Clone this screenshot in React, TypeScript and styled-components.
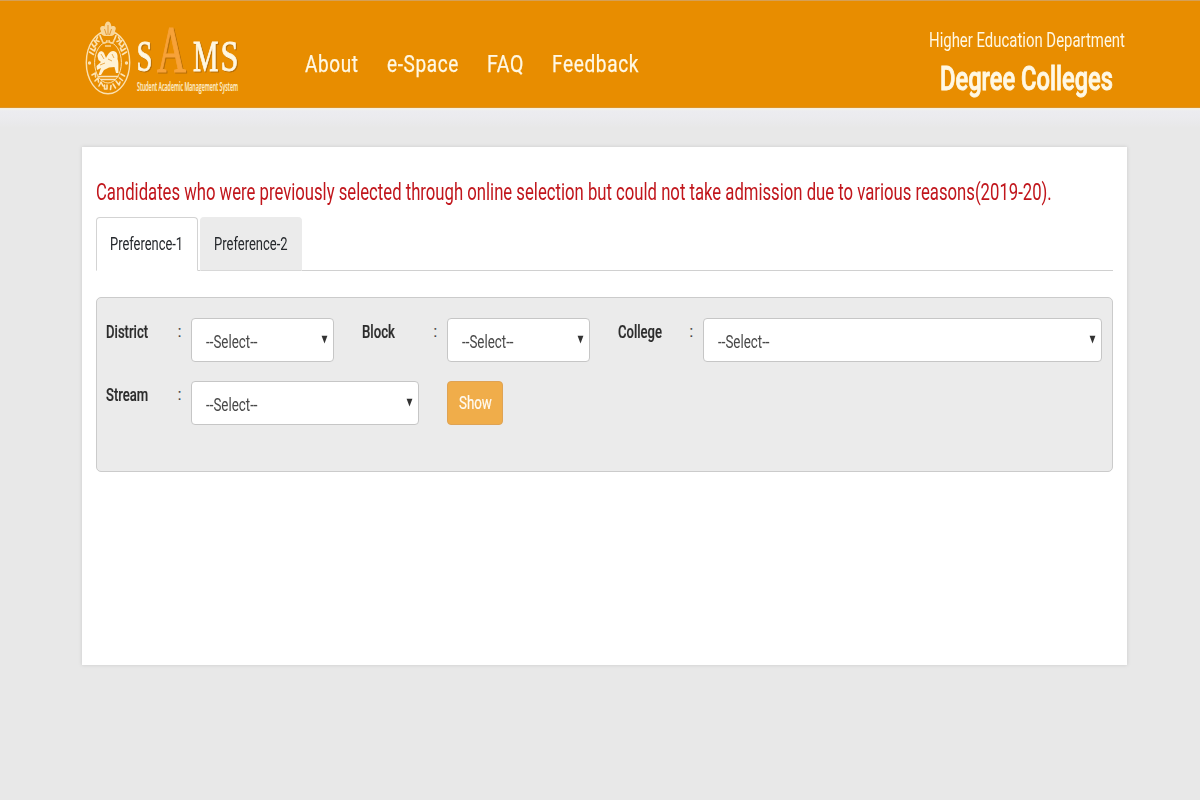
import React, { useLayoutEffect, useRef, useState } from 'react';
import styled, { createGlobalStyle } from 'styled-components';

const Global = createGlobalStyle`
  * { box-sizing: border-box; }
  body { margin: 0; background: #e8e8e8; font-family: Roboto, "Liberation Sans", sans-serif; }
`;

const Page = styled.div`
  min-height: 800px;
  background: #e8e8e8;
`;

const Header = styled.header`
  height: 108px;
  border-top: 1px solid #d5a057;
  border-bottom: 1px solid #dd9428;
  background: #e88d00;
  display: flex;
  align-items: flex-start;
  padding: 0 75px 0 80px;
  color: #fff8e4;
`;

const Logo = styled.svg`
  width: 170px;
  height: 95px;
  margin-top: 9px;
  flex: none;
  overflow: visible;
`;

const LogoLetters = styled.g`
  font-family: "Liberation Serif", serif;
  filter: drop-shadow(1px 1px 0 rgba(150, 90, 10, 0.6));
`;

const Nav = styled.nav`
  display: flex;
  gap: 28px;
  margin: 48px 0 0 55px;
  font-size: 24.8px;
  line-height: 30px;
  font-weight: 400;
  letter-spacing: 0.8px;
  -webkit-text-stroke: 0.25px #fff8e4;
`;

const Department = styled.div`
  margin-left: auto;
  display: flex;
  flex-direction: column;
  align-items: flex-end;
`;

const DeptName = styled.div`
  margin-top: 26px;
  font-size: 21px;
  line-height: 26px;
`;

const DeptUnit = styled.div`
  margin: 5px 12px 0 0;
  font-size: 33px;
  line-height: 42px;
  font-weight: 500;
  -webkit-text-stroke: 0.9px #fff8e4;
`;

const Band = styled.div`
  height: 39px;
  background: linear-gradient(#f8edd2 0, #f3f1ec 1px, #ececf0 3px, #ebebee 10px, #e8e8e8 20px);
`;

const Card = styled.main`
  width: 1045px;
  height: 518px;
  margin-left: 82px;
  padding: 30px 14px 0;
  background: #fff;
  box-shadow: 0 0 4px rgba(0, 0, 0, 0.13);
`;

const Notice = styled.h1`
  margin: 0;
  height: 40px;
  font-size: 24.4px;
  line-height: 29px;
  font-weight: 400;
  color: #c1161c;
`;

const Tabs = styled.div`
  display: flex;
  gap: 2px;
  height: 54px;
  border-bottom: 1px solid #d0d0d0;
`;

const Tab = styled.div<{ $active?: boolean }>`
  width: 102px;
  height: 54px;
  padding-left: 13px;
  border: 1px solid ${(p) => (p.$active ? '#d3d3d3' : '#ebebeb')};
  border-bottom-color: ${(p) => (p.$active ? '#fff' : '#d8d8d8')};
  border-radius: 4px 4px 0 0;
  background: ${(p) => (p.$active ? '#fff' : '#ebebeb')};
  font-size: 18.4px;
  line-height: 51px;
  color: #25282c;
`;

const Panel = styled.section`
  width: 1017px;
  height: 175px;
  margin-top: 26px;
  padding: 20px 10px 0 9px;
  border: 1px solid #cbcbcb;
  border-radius: 5px;
  background: #ebebeb;
`;

const Row = styled.div`
  display: flex;
  height: 63px;
`;

const Label = styled.div`
  width: 71.4px;
  font-size: 18.4px;
  line-height: 27px;
  font-weight: 500;
  color: #2c2c2c;
  -webkit-text-stroke: 0.2px #2c2c2c;
`;

const Colon = styled.div`
  width: 14px;
  font-size: 17px;
  line-height: 27px;
  color: #444;
`;

const Select = styled.div<{ $width: number; $gap?: number }>`
  display: flex;
  justify-content: space-between;
  width: ${(p) => p.$width}px;
  height: 44px;
  margin-right: ${(p) => p.$gap ?? 0}px;
  padding: 0 5px 0 14px;
  border: 1px solid #c6c6c6;
  border-radius: 4px;
  background: #fff;
  font-size: 18.2px;
  line-height: 45px;
  color: #484848;
`;

const Arrow = styled.svg`
  width: 7px;
  height: 9px;
  margin-top: 16px;
`;

const Show = styled.button`
  width: 56px;
  height: 44px;
  padding: 0 0 0 11px;
  border: 1px solid #dfa354;
  border-radius: 4px;
  background: #f0ad4a;
  font: 400 18.2px/42px Roboto, sans-serif;
  text-align: left;
  color: #fffaf0;
  -webkit-text-stroke: 0.2px #fffaf0;
`;

const Fixed = styled.span<{ $width: number }>`
  display: block;
  width: ${(p) => p.$width}px;
  white-space: nowrap;
`;

const Scaled = styled.span`
  display: block;
  width: max-content;
  transform-origin: 0 50%;
`;

/* Condensed text: squeezes its content horizontally to the given width. */
function Condensed({ width, children }: { width: number; children: string }) {
  const ref = useRef<HTMLSpanElement>(null);
  const [scale, setScale] = useState(1);
  useLayoutEffect(() => {
    if (ref.current) setScale(width / ref.current.offsetWidth);
  }, [width, children]);
  return (
    <Fixed $width={width}>
      <Scaled ref={ref} style={{ transform: `scaleX(${scale})` }}>{children}</Scaled>
    </Fixed>
  );
}

function Dropdown({ width, gap }: { width: number; gap?: number }) {
  return (
    <Select $width={width} $gap={gap}>
      <Condensed width={51.5}>--Select--</Condensed>
      <Arrow viewBox="0 0 7 9"><path d="M.6 .8H6.4L3.5 8.4Z" fill="#333" /></Arrow>
    </Select>
  );
}

function Field({ name, nameWidth, width, gap }: { name: string; nameWidth: number; width: number; gap?: number }) {
  return (
    <>
      <Label><Condensed width={nameWidth}>{name}</Condensed></Label>
      <Colon><Condensed width={4}>:</Condensed></Colon>
      <Dropdown width={width} gap={gap} />
    </>
  );
}

function SamsLogo() {
  return (
    <Logo viewBox="0 0 170 95">
      <g fill="none" stroke="#fbe0ae">
        <ellipse cx="28" cy="52.5" rx="21.7" ry="31.3" strokeWidth="1.4" />
        <ellipse cx="28" cy="52.5" rx="13.4" ry="20.5" strokeWidth="1" />
      </g>
      {/* lettering around the ring */}
      <g fill="none" stroke="#fce3b4" strokeWidth="1.6" strokeLinecap="round" strokeLinejoin="round">
        <path d="M9.5 42l4 2.5M10.5 38.5l4 2.5 1-3M12 34l2 3 2-2M14 30.5l3 3.5M17.5 27l-1.5 3.5 3 1M20 25.5l1.5 4" />
        <path d="M46.5 42l-4 2.5M45.5 38.5l-4 2.5-1-3M44 34l-2 3-2-2M42 30.5l-3 3.5M38.5 27l1.5 3.5-3 1M36 25.5l-1.5 4" />
        <path d="M12 65l3.5-2v4M15 71l3-3 .5 4M19 76l2-4 2 4M24.5 75v4h2.5v-4M31 75.5l-.5 4M33 74l2.5 4M36 71l3 4 1-3M39.5 68l3 2.5M41 64l3.5 2" />
      </g>
      <circle cx="9.5" cy="53" r="1.7" fill="#fbe0ae" />
      <circle cx="46.5" cy="53" r="1.7" fill="#fbe0ae" />
      {/* crest */}
      <path d="M28 11.5C31 12 31 15 31.5 16.5C35 15 37 18 35 21C36 24 33 26 30.5 26H25.5C23 26 20 24 21 21C19 18 21 15 24.5 16.5C25 15 25 12 28 11.5Z" fill="#f9d698" />
      <path d="M28 15v10M24.5 19l2 6M31.5 19l-2 6" stroke="#e0912a" strokeWidth=".9" fill="none" />
      <path d="M22 29.5C22 34 27 34 27 30M29 30C29 34 34 34 34 29.5M25 36H31" stroke="#f9d698" strokeWidth="1.5" fill="none" />
      {/* horse and rider */}
      <path d="M17.5 46C18 41 22 40 24 43L26 48C28 44 30 41 33 41C37 41 38 45 37.5 49C39 53 38 57 38.5 63H36L34.5 57L29 57.5L24 60L21 65H18.5L21 58L17 60L16.5 56L21 52L18.5 50Z" fill="#fff2d5" />
      <path d="M21 44l3 5M28 49l4 2M32 44l2 4M20 55l5-2" stroke="#e8a541" strokeWidth=".9" fill="none" />
      <path d="M17.5 66.5H38.5M20.5 69.5H35.5" stroke="#fbe4b8" strokeWidth="1.5" />
      <LogoLetters>
        <text x="77" y="61.5" fontSize="67" fill="#f7a239" stroke="#f7a239" strokeWidth="1.2" textLength="29" lengthAdjust="spacingAndGlyphs">A</text>
        <g fill="#fff7e2" stroke="#fff7e2" strokeWidth=".9">
          <text x="56.5" y="60.5" fontSize="45" textLength="16" lengthAdjust="spacingAndGlyphs">S</text>
          <text x="113" y="60.5" fontSize="44" textLength="25.5" lengthAdjust="spacingAndGlyphs">M</text>
          <text x="140.5" y="60.5" fontSize="45" textLength="18" lengthAdjust="spacingAndGlyphs">S</text>
        </g>
      </LogoLetters>
      <text x="57" y="80.5" fontFamily='"Open Sans", sans-serif' fontWeight="600" fontSize="12.3" fill="#fdebc8" stroke="#fdebc8" strokeWidth=".2" textLength="101" lengthAdjust="spacingAndGlyphs">Student Academic Management System</text>
    </Logo>
  );
}

export default function App() {
  return (
    <Page>
      <Global />
      <Header>
        <SamsLogo />
        <Nav>
          <Condensed width={53.5}>About</Condensed>
          <Condensed width={72}>e-Space</Condensed>
          <Condensed width={37}>FAQ</Condensed>
          <Condensed width={87}>Feedback</Condensed>
        </Nav>
        <Department>
          <DeptName><Condensed width={196}>Higher Education Department</Condensed></DeptName>
          <DeptUnit><Condensed width={173}>Degree Colleges</Condensed></DeptUnit>
        </Department>
      </Header>
      <Band />
      <Card>
        <Notice>
          <Condensed width={955.5}>Candidates who were previously selected through online selection but could not take admission due to various reasons(2019-20).</Condensed>
        </Notice>
        <Tabs>
          <Tab $active><Condensed width={73}>Preference-1</Condensed></Tab>
          <Tab><Condensed width={73.5}>Preference-2</Condensed></Tab>
        </Tabs>
        <Panel>
          <Row>
            <Field name="District" nameWidth={42} width={143} gap={27.5} />
            <Field name="Block" nameWidth={33} width={143} gap={27.5} />
            <Field name="College" nameWidth={44} width={398.5} />
          </Row>
          <Row>
            <Field name="Stream" nameWidth={42} width={228} gap={27.5} />
            <Show><Condensed width={33}>Show</Condensed></Show>
          </Row>
        </Panel>
      </Card>
    </Page>
  );
}
